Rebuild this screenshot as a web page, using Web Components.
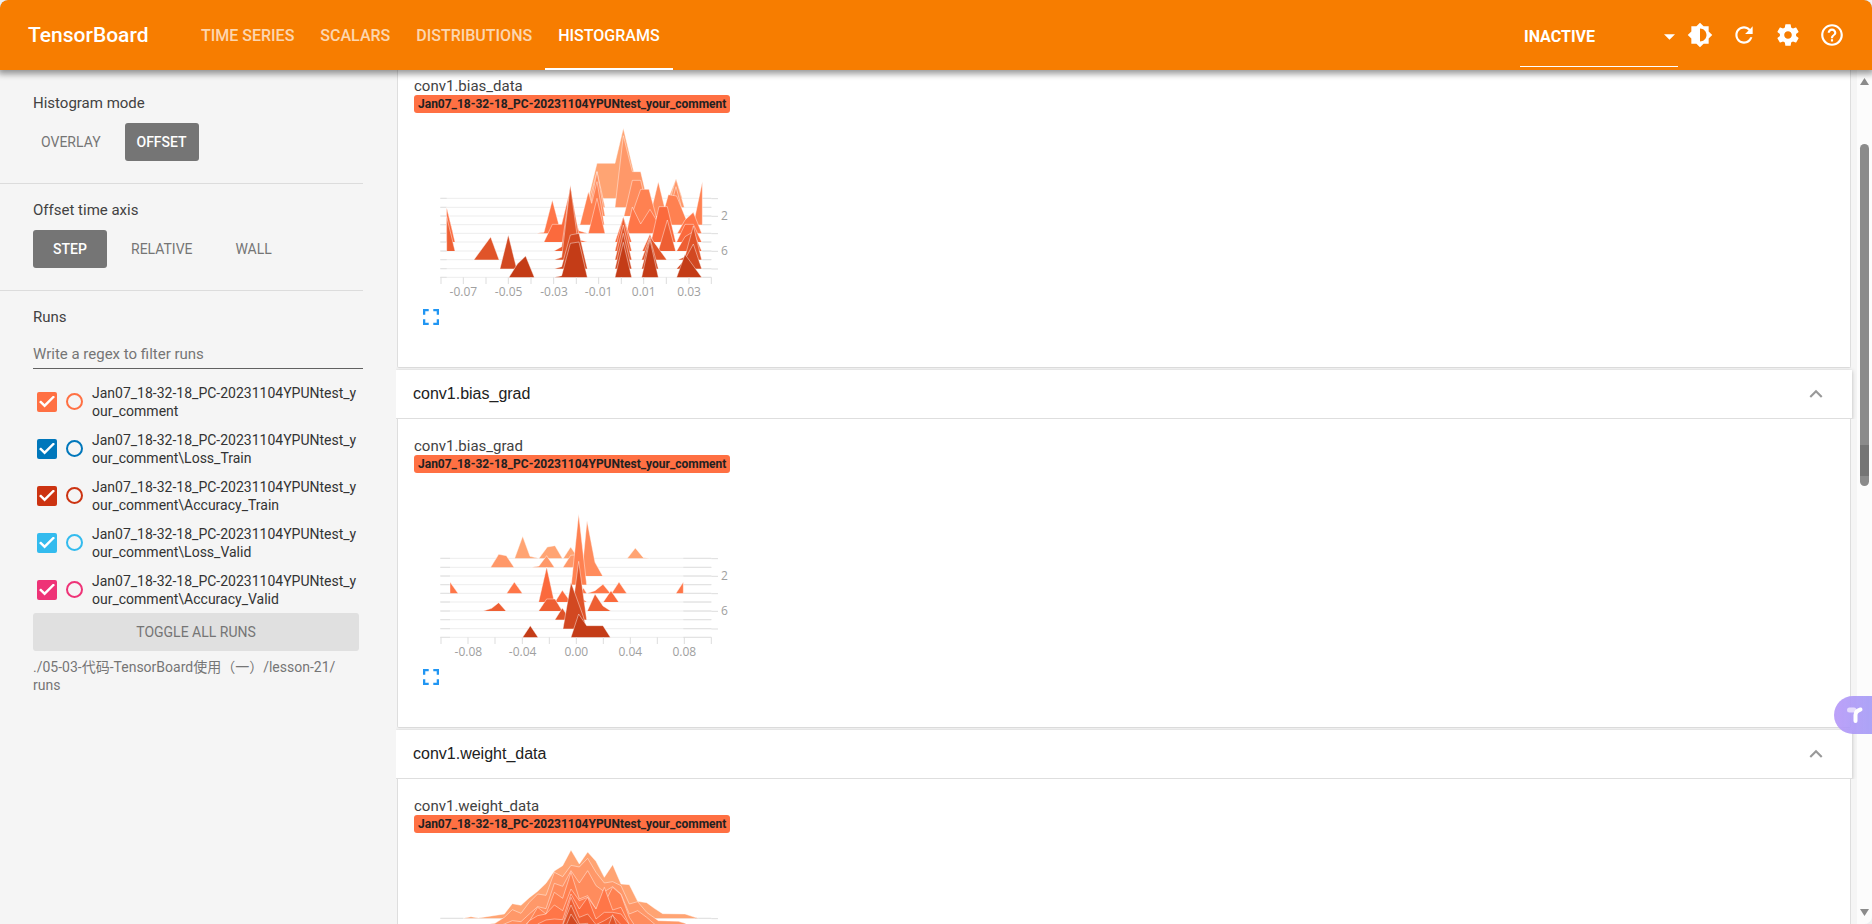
<!DOCTYPE html>
<html lang="en">
<head>
<meta charset="utf-8">
<title>TensorBoard</title>
<style>
html, body { margin: 0; height: 100%; }
body { background: #eef0f2; font-family: Roboto, "Noto Sans CJK SC", sans-serif; color: #424242; overflow: hidden; }
</style>
</head>
<body>
<tb-app></tb-app>
<script>
const define = (name, html, setup) => {
  const template = document.createElement('template');
  template.innerHTML = html;
  customElements.define(name, class extends HTMLElement {
    constructor() {
      super();
      this.attachShadow({ mode: 'open' }).append(template.content.cloneNode(true));
    }
    connectedCallback() { if (setup) setup(this, this.shadowRoot); }
  });
};

/* Ridge data: one layer per step, points as x,y pairs in plot units. */
const COLORS = ['#ffa473', '#ff9869', '#ff8c5d', '#ff8151', '#ff7648', '#fb6a3d', '#ee5f33', '#e05429', '#d24821', '#c43c17'];
const CHARTS = {
  'conv1.bias_data': {
    labels: [[205, '-0.07'], [341, '-0.05'], [477, '-0.03'], [611, '-0.01'], [746, '0.01'], [882, '0.03']],
    ticks: [138, 205, 273, 340, 408, 476, 544, 611, 679, 746, 814, 882, 949],
    range: [155, 922],
    layers: [
      ['580,385 606,280 660,280 685,175 715,300 735,385', '820,385 843,327 862,385'],
      ['577,412 606,305 630,412', '660,412 685,197 712,305 737,305 762,412', '818,412 843,327 868,412'],
      ['580,438 606,305 630,438', '687,438 712,331 737,331 762,438', '765,438 790,335 815,438', '820,438 843,350 866,438'],
      ['555,464 580,365 590,400 606,335 628,464', '700,464 737,358 762,358 790,464', '795,464 820,374 845,378 880,464', '895,464 922,335 922,464'],
      ['425,490 447,487 472,390 497,485 526,400 552,482 577,490', '580,490 606,385 630,490', '694,490 712,411 737,462 765,418 790,460 815,490', '847,490 870,450 895,427 920,490', '155,490 155,413 174,490'],
      ['155,516 155,413 180,516', '447,516 472,463 500,463 526,355 552,509 577,516', '768,516 792,410 817,410 842,516', '845,516 870,463 895,463 920,516', '660,516 685,440 710,516'],
      ['155,543 155,440 180,543', '477,543 500,530 526,350 560,543', '660,543 685,440 710,543', '790,543 817,450 842,543', '845,543 870,500 895,485 920,543', '742,543 765,492 785,543'],
      ['237,569 287,501 312,569', '478,569 500,562 526,345 556,569', '660,569 685,465 710,569', '740,569 765,500 815,569', '849,569 870,560 895,468 920,569'],
      ['315,596 340,495 365,596', '478,596 500,590 526,495 552,490 577,596', '660,596 685,490 710,596', '740,596 765,504 790,596', '845,596 870,568 895,522 920,596'],
      ['342,622 367,582 392,558 418,622', '478,622 500,617 526,520 552,516 577,622', '660,622 685,517 710,622', '740,622 765,510 790,622', '845,622 870,553 920,622']
    ]
  },
  'conv1.bias_grad': {
    labels: [[220, '-0.08'], [383, '-0.04'], [544, '0.00'], [706, '0.04'], [868, '0.08']],
    ticks: [138, 219, 300, 382, 463, 544, 625, 706, 787, 868, 949],
    range: [165, 865],
    layers: [
      ['359,385 383,319 405,379 430,385', '432,385 457,351 480,347 502,385', '505,385 527,351 550,385', '697,385 721,354 745,383 765,385'],
      ['287,412 311,373 334,377 357,412', '410,412 432,408 455,377 478,412', '504,412 527,376 550,374 570,412'],
      ['560,438 576,272 600,397 623,438'],
      ['529,464 551,252 575,464'],
      ['165,490 165,456 189,490', '335,490 358,456 382,490', '555,490 565,474 575,490', '577,490 600,482 624,463 646,490', '650,490 672,456 695,490', '843,490 865,456 865,490'],
      ['431,516 455,411 478,516', '480,516 502,481 527,516', '560,516 565,508 575,516', '625,516 648,482 671,516'],
      ['265,543 290,535 311,518 333,543', '431,543 455,507 480,507 502,543', '577,543 600,492 624,528 647,543'],
      ['480,569 502,534 525,569', '528,569 551,394 575,569'],
      ['504,596 528,457 565,560 575,596'],
      ['383,622 406,587 429,622', '528,622 551,552 575,587 624,587 646,622']
    ]
  },
  'conv1.weight_data': {
    labels: [],
    ticks: [],
    range: [205, 900],
    layers: [
      ['205,385 228,380 250,384 275,380 328,372 352,341 378,346 403,323 428,304 453,280 478,243 503,227 528,180 553,222 578,186 603,214 628,262 653,224 678,282 703,284 728,334 755,338 778,355 803,371 870,372 900,382 910,385'],
      ['250,412 270,404 300,400 328,382 352,359 378,370 403,337 428,312 453,316 478,247 503,260 528,226 553,231 578,205 603,247 628,279 653,275 678,287 703,342 728,335 755,367 790,392 850,394 870,400 890,412'],
      ['300,412 328,402 352,392 378,395 403,372 428,350 453,356 478,280 503,289 528,242 553,279 578,242 603,287 628,305 653,290 678,312 703,372 728,362 755,382 790,412'],
      ['350,438 403,394 428,352 453,372 478,307 503,325 528,247 553,327 578,317 603,357 628,340 653,292 678,314 703,382 740,438'],
      ['370,438 403,392 428,377 453,372 478,345 503,362 528,297 553,332 578,322 603,357 628,292 653,360 678,352 703,404 730,438'],
      ['400,438 428,402 453,390 478,387 503,389 528,312 553,357 578,322 603,387 628,367 653,367 678,372 703,404 730,438'],
      ['470,438 503,404 528,322 553,382 578,372 603,404 628,392 653,377 678,404 700,438'],
      ['490,438 528,345 553,402 578,400 603,438', '628,438 653,374 678,438'],
      ['500,438 528,372 553,410 578,438']
    ]
  }
};

define('tb-icon', `
<style>
:host { display: block; width: 26px; height: 26px; }
svg { display: block; width: 100%; height: 100%; fill: currentColor; }
</style><svg aria-hidden="true"></svg>`, (host, root) => {
  const icons = {
    brightness: ['0 0 24 24', 'M20 15.31L23.31 12 20 8.69V4h-4.69L12 .69 8.69 4H4v4.69L.69 12 4 15.31V20h4.69L12 23.31 15.31 20H20v-4.69zM12 18V6c3.31 0 6 2.69 6 6s-2.69 6-6 6z'],
    refresh: ['0 0 24 24', 'M17.65 6.35C16.2 4.9 14.21 4 12 4c-4.42 0-7.99 3.58-7.99 8s3.57 8 7.99 8c3.73 0 6.84-2.55 7.73-6h-2.08c-.82 2.33-3.04 4-5.65 4-3.31 0-6-2.69-6-6s2.69-6 6-6c1.66 0 3.14.69 4.22 1.78L13 11h7V4l-2.35 2.35z'],
    settings: ['0 0 24 24', 'M19.43 12.98c.04-.32.07-.64.07-.98s-.03-.66-.07-.98l2.11-1.65c.19-.15.24-.42.12-.64l-2-3.46c-.12-.22-.39-.3-.61-.22l-2.49 1c-.52-.4-1.08-.73-1.69-.98l-.38-2.65C14.46 2.18 14.25 2 14 2h-4c-.25 0-.46.18-.49.42l-.38 2.65c-.61.25-1.17.59-1.69.98l-2.49-1c-.23-.09-.49 0-.61.22l-2 3.46c-.13.22-.07.49.12.64l2.11 1.65c-.04.32-.07.65-.07.98s.03.66.07.98l-2.11 1.65c-.19.15-.24.42-.12.64l2 3.46c.12.22.39.3.61.22l2.49-1c.52.4 1.08.73 1.69.98l.38 2.65c.03.24.24.42.49.42h4c.25 0 .46-.18.49-.42l.38-2.65c.61-.25 1.17-.59 1.69-.98l2.49 1c.23.09.49 0 .61-.22l2-3.46c.12-.22.07-.49-.12-.64l-2.11-1.65zM12 15.5c-1.93 0-3.5-1.57-3.5-3.5s1.57-3.5 3.5-3.5 3.5 1.57 3.5 3.5-1.57 3.5-3.5 3.5z'],
    help: ['0 0 24 24', 'M11 18h2v-2h-2v2zm1-16C6.48 2 2 6.48 2 12s4.48 10 10 10 10-4.48 10-10S17.52 2 12 2zm0 18c-4.41 0-8-3.59-8-8s3.59-8 8-8 8 3.59 8 8-3.59 8-8 8zm0-14c-2.21 0-4 1.79-4 4h2c0-1.1.9-2 2-2s2 .9 2 2c0 2-3 1.75-3 5h2c0-2.25 3-2.5 3-5 0-2.21-1.79-4-4-4z'],
    expand: ['5 5 14 14', 'M7 14H5v5h5v-2H7v-3zm-2-4h2V7h3V5H5v5zm12 7h-3v2h5v-5h-2v3zM14 5v2h3v3h2V5h-5z'],
    up: ['0 0 24 24', 'M12 8l-6 6 1.41 1.41L12 10.83l4.59 4.58L18 14z'],
    caret: ['7 10 10 5', 'M7 10l5 5 5-5z']
  };
  const [box, d] = icons[host.getAttribute('name')];
  const svg = root.querySelector('svg');
  svg.setAttribute('viewBox', box);
  svg.innerHTML = `<path d="${d}"/>`;
});

define('tb-tab', `
<style>
:host { display: block; }
a { box-sizing: border-box; display: flex; align-items: center; height: 70px; padding: 2px 13px 0; border-bottom: 2px solid transparent;
  color: rgba(255,255,255,.7); font-size: 16px; font-weight: 500; text-decoration: none; white-space: nowrap; }
:host([active]) a { color: #fff; border-color: #fff; }
</style><a href="#"><slot></slot></a>`);

define('tb-header', `
<style>
:host { display: flex; align-items: center; height: 70px; background: #f77d00; color: #fff; border-radius: 8px 8px 0 0;
  box-shadow: 0 2px 6px 2px rgba(0,0,0,.4); position: relative; z-index: 2; }
h1 { margin: 0 0 0 28px; width: 160px; font-size: 21px; font-weight: 500; }
nav { display: flex; flex: 1; }
.status { display: flex; align-items: center; width: 158px; height: 60px; margin-top: 4px; border-bottom: 1px solid #fff; box-sizing: border-box; }
select { appearance: none; flex: 1; border: 0; padding: 0 0 0 4px; background: none; color: #fff; font: 700 16px Roboto, sans-serif; }
.status tb-icon { width: 11px; height: 6px; margin-right: 3px; }
.actions { display: flex; gap: 18px; margin: 0 27px 0 9px; }
button { padding: 0; border: 0; background: none; color: inherit; }
</style>
<h1>TensorBoard</h1>
<nav>
<tb-tab>TIME SERIES</tb-tab><tb-tab>SCALARS</tb-tab><tb-tab>DISTRIBUTIONS</tb-tab><tb-tab active>HISTOGRAMS</tb-tab>
</nav>
<div class="status"><select aria-label="Inactive plugins"><option>INACTIVE</option></select><tb-icon name="caret"></tb-icon></div>
<div class="actions">
<button aria-label="Theme"><tb-icon name="brightness"></tb-icon></button>
<button aria-label="Reload"><tb-icon name="refresh"></tb-icon></button>
<button aria-label="Settings"><tb-icon name="settings"></tb-icon></button>
<button aria-label="Help"><tb-icon name="help"></tb-icon></button>
</div>`);

define('tb-choice', `
<style>
:host { display: block; }
button { min-width: 74px; height: 38px; padding: 0 8px; border: 0; border-radius: 3px; background: none; color: #757575; font: 14px Roboto, sans-serif; }
:host([active]) button { background: #757575; color: #fff; font-weight: 500; }
</style><button><slot></slot></button>`);

define('tb-option-group', `
<style>
:host { display: block; padding: 16px 0 22px 33px; border-bottom: 1px solid #dcdcdc; }
h2 { margin: 0 0 10px; font-size: 15px; line-height: 20px; font-weight: 400; }
div { display: flex; gap: 16px; }
</style><h2></h2><div><slot></slot></div>`, (host, root) => {
  root.querySelector('h2').textContent = host.getAttribute('heading');
});

define('tb-run', `
<style>
:host { display: flex; align-items: center; height: 47px; padding-left: 4px; }
input { appearance: none; margin: 0; flex: none; box-sizing: border-box; }
[type=checkbox] { display: grid; place-items: center; width: 20px; height: 20px; border-radius: 2px; background: var(--run); }
[type=checkbox]::before { content: ""; width: 16px; height: 12px; background: #fff;
  clip-path: polygon(0 55%, 12% 42%, 35% 70%, 89% 0, 100% 12%, 35% 100%); }
[type=radio] { width: 17px; height: 17px; margin: 0 9px; border: 2px solid var(--run); border-radius: 50%; }
label { flex: 1; font-size: 14px; line-height: 18px; word-break: break-all; color: #333; }
</style><input type="checkbox" id="on" checked><input type="radio" aria-label="Show only this run"><label for="on"><slot></slot></label>`, (host) => {
  host.style.setProperty('--run', host.getAttribute('color'));
});

define('tb-sidebar', `
<style>
:host { display: block; box-sizing: border-box; width: 363px; padding-top: 7px; }
.runs { padding: 16px 0 0 33px; }
h2 { margin: 0 0 16px; font-size: 15px; line-height: 20px; font-weight: 400; }
.filter { box-sizing: border-box; width: 100%; height: 26px; margin-bottom: 9px; padding: 0 0 4px; border: 0; border-bottom: 1px solid #616161; border-radius: 0;
  background: none; font: 15px Roboto, sans-serif; }
.filter::placeholder { color: #757575; }
.toggle { display: block; width: 326px; height: 38px; border: 0; border-radius: 3px; background: #e0e0e0; color: #757575; font: 14px Roboto, sans-serif; }
p { margin: 7px 0 0; width: 326px; font-size: 14px; line-height: 18px; color: #757575; word-break: break-word; }
</style>
<tb-option-group heading="Histogram mode"><tb-choice>OVERLAY</tb-choice><tb-choice active>OFFSET</tb-choice></tb-option-group>
<tb-option-group heading="Offset time axis"><tb-choice active>STEP</tb-choice><tb-choice>RELATIVE</tb-choice><tb-choice>WALL</tb-choice></tb-option-group>
<div class="runs">
<h2>Runs</h2>
<input class="filter" placeholder="Write a regex to filter runs" aria-label="Filter runs">
<tb-run color="#ff7043">Jan07_18-32-18_PC-20231104YPUNtest_your_comment</tb-run>
<tb-run color="#0077bb">Jan07_18-32-18_PC-20231104YPUNtest_your_comment\\Loss_Train</tb-run>
<tb-run color="#cc3311">Jan07_18-32-18_PC-20231104YPUNtest_your_comment\\Accuracy_Train</tb-run>
<tb-run color="#33bbee">Jan07_18-32-18_PC-20231104YPUNtest_your_comment\\Loss_Valid</tb-run>
<tb-run color="#ee3377">Jan07_18-32-18_PC-20231104YPUNtest_your_comment\\Accuracy_Valid</tb-run>
<button class="toggle">TOGGLE ALL RUNS</button>
<p>./05-03-代码-TensorBoard使用（一）/lesson-21/<wbr>runs</p>
</div>`);

define('tb-ridge-chart', `
<style>
:host { display: block; width: 300px; }
svg { display: block; width: 300px; height: 196px; }
text { font: 12px "Open Sans", sans-serif; fill: #a0a0a0; text-anchor: middle; }
.area { stroke: rgba(255,255,255,.65); stroke-width: 2; }
</style><svg viewBox="0 0 300 196" role="img"></svg>`, (host, root) => {
  const name = host.getAttribute('data-key');
  const { labels, ticks, range, layers } = CHARTS[name];
  const px = v => (v - 120) / 3, py = v => (v - 129) / 3;
  const bases = [385, 412, 438, 464, 490, 516, 543, 569, 596, 622];
  let s = '<g transform="scale(.33333) translate(-120 -129)">';
  bases.forEach((y, i) => {
    s += `<path d="M136 ${y}H949" stroke="#ededed" stroke-width="3"/>`;
    s += `<path d="M136 ${y}H${range[0]}M${range[1]} ${y}H949" stroke="#e0e0e0" stroke-width="3"/>`;
    if (i % 2 === 0) s += `<path d="M949 ${y + 1}H969" stroke="#ddd" stroke-width="3"/>`;
  });
  layers.forEach((shapes, i) => shapes.forEach(p => {
    s += `<polygon points="${p}" fill="${COLORS[i]}"/><polyline class="area" points="${p}" fill="none"/>`;
  }));
  ticks.forEach(x => { s += `<path d="M${x} 622V642" stroke="#ddd" stroke-width="3"/>`; });
  s += '</g>';
  labels.forEach(([x, t]) => { s += `<text x="${px(x)}" y="${py(678)}">${t}</text>`; });
  if (labels.length) s += `<text x="${px(988)}" y="${py(450)}">2</text><text x="${px(988)}" y="${py(555)}">6</text>`;
  const svg = root.querySelector('svg');
  svg.setAttribute('aria-label', name);
  svg.innerHTML = s;
});

define('tb-card', `
<style>
:host { display: block; box-sizing: border-box; height: 309px; margin: 0 1px 2px; padding: 18px 16px 0; background: #fff; border: solid #dedede; border-width: 0 1px 1px; border-radius: 0 0 2px 2px; }
:host([scrolled]) { height: 298px; padding-top: 7px; }
h3 { margin: 0; font-size: 15px; line-height: 18px; font-weight: 400; }
.tag { display: block; width: fit-content; padding: 0 4px; border-radius: 3px; background: #ff7043; color: #212121; font-size: 12px; line-height: 18px; font-weight: 700; white-space: nowrap; }
tb-ridge-chart { margin-left: 21px; }
button { display: block; margin-left: 9px; padding: 0; border: 0; background: none; color: #2196f3; }
tb-icon { width: 16px; height: 16px; }
</style>
<h3></h3><span class="tag">Jan07_18-32-18_PC-20231104YPUNtest_your_comment</span>
<button aria-label="Expand chart"><tb-icon name="expand"></tb-icon></button>`, (host, root) => {
  const name = host.getAttribute('name');
  root.querySelector('h3').textContent = name;
  const chart = document.createElement('tb-ridge-chart');
  chart.setAttribute('data-key', name);
  root.querySelector('button').before(chart);
});

define('tb-category', `
<style>
:host { display: block; }
button { display: flex; align-items: center; justify-content: space-between; box-sizing: border-box; width: 100%; height: 49px; padding: 0 23px 0 17px;
  border: 0; border-bottom: 1px solid #dedede; background: #fff; color: #212121; font: 16px "Liberation Sans", sans-serif; box-shadow: 0 1px 4px rgba(0,0,0,.25); clip-path: inset(-3px -5px 0); }
tb-icon { color: #999; }
</style><button aria-expanded="true"><slot></slot><tb-icon name="up"></tb-icon></button>`);

define('tb-scrollbar', `
<style>
:host { display: flex; flex-direction: column; align-items: center; box-sizing: border-box; width: 15px; padding: 8px 0; background: #fcfcfc; }
i { width: 9px; height: 7px; background: #8b8b8b; clip-path: polygon(50% 0, 100% 100%, 0 100%); }
i:last-child { clip-path: polygon(0 0, 100% 0, 50% 100%); }
.track { display: flex; flex-direction: column; flex: 1; align-items: center; width: 100%; }
.before { flex: 59; }
.thumb { flex: 343; width: 9px; border-radius: 5px; background: linear-gradient(#8b8b8b 88%, #757575 88%, #757575 97%, #8b8b8b 97%); }
.after { flex: 424; }
</style><i></i><div class="track"><div class="before"></div><div class="thumb"></div><div class="after"></div></div><i></i>`);

define('tb-assistant', `
<style>
:host { position: fixed; right: 0; bottom: 190px; display: block; z-index: 3; }
button { display: grid; place-items: center; width: 38px; height: 38px; padding: 0 0 0 4px; border: 0; border-radius: 19px 0 0 19px; background: linear-gradient(90deg, rgba(181,151,248,.9), rgba(161,151,245,.88)); }
svg { display: block; }
</style>
<button aria-label="Assistant"><svg width="18" height="18" viewBox="0 0 18 18" fill="none" stroke-linecap="round"><path d="M3.5 4H8" stroke="#e5dcfc" stroke-width="5"/><path d="M9.5 15V9q0-4 5-5.500" stroke="#fff" stroke-width="4"/></svg></button>`);

define('tb-app', `
<style>
:host { display: flex; flex-direction: column; height: 100vh; overflow: hidden; border-radius: 8px 8px 8px 0; background: #f5f5f5; }
.page { display: flex; flex: 1; min-height: 0; }
aside { flex: none; width: 396px; }
main { flex: 1; min-width: 0; overflow: hidden; padding-right: 5px; }
</style>
<tb-header></tb-header>
<div class="page">
<aside><tb-sidebar></tb-sidebar></aside>
<main>
<tb-card scrolled name="conv1.bias_data"></tb-card>
<tb-category>conv1.bias_grad</tb-category><tb-card name="conv1.bias_grad"></tb-card>
<tb-category>conv1.weight_data</tb-category><tb-card name="conv1.weight_data"></tb-card>
</main>
<tb-scrollbar></tb-scrollbar>
</div>
<tb-assistant></tb-assistant>`);
</script>
</body>
</html>
